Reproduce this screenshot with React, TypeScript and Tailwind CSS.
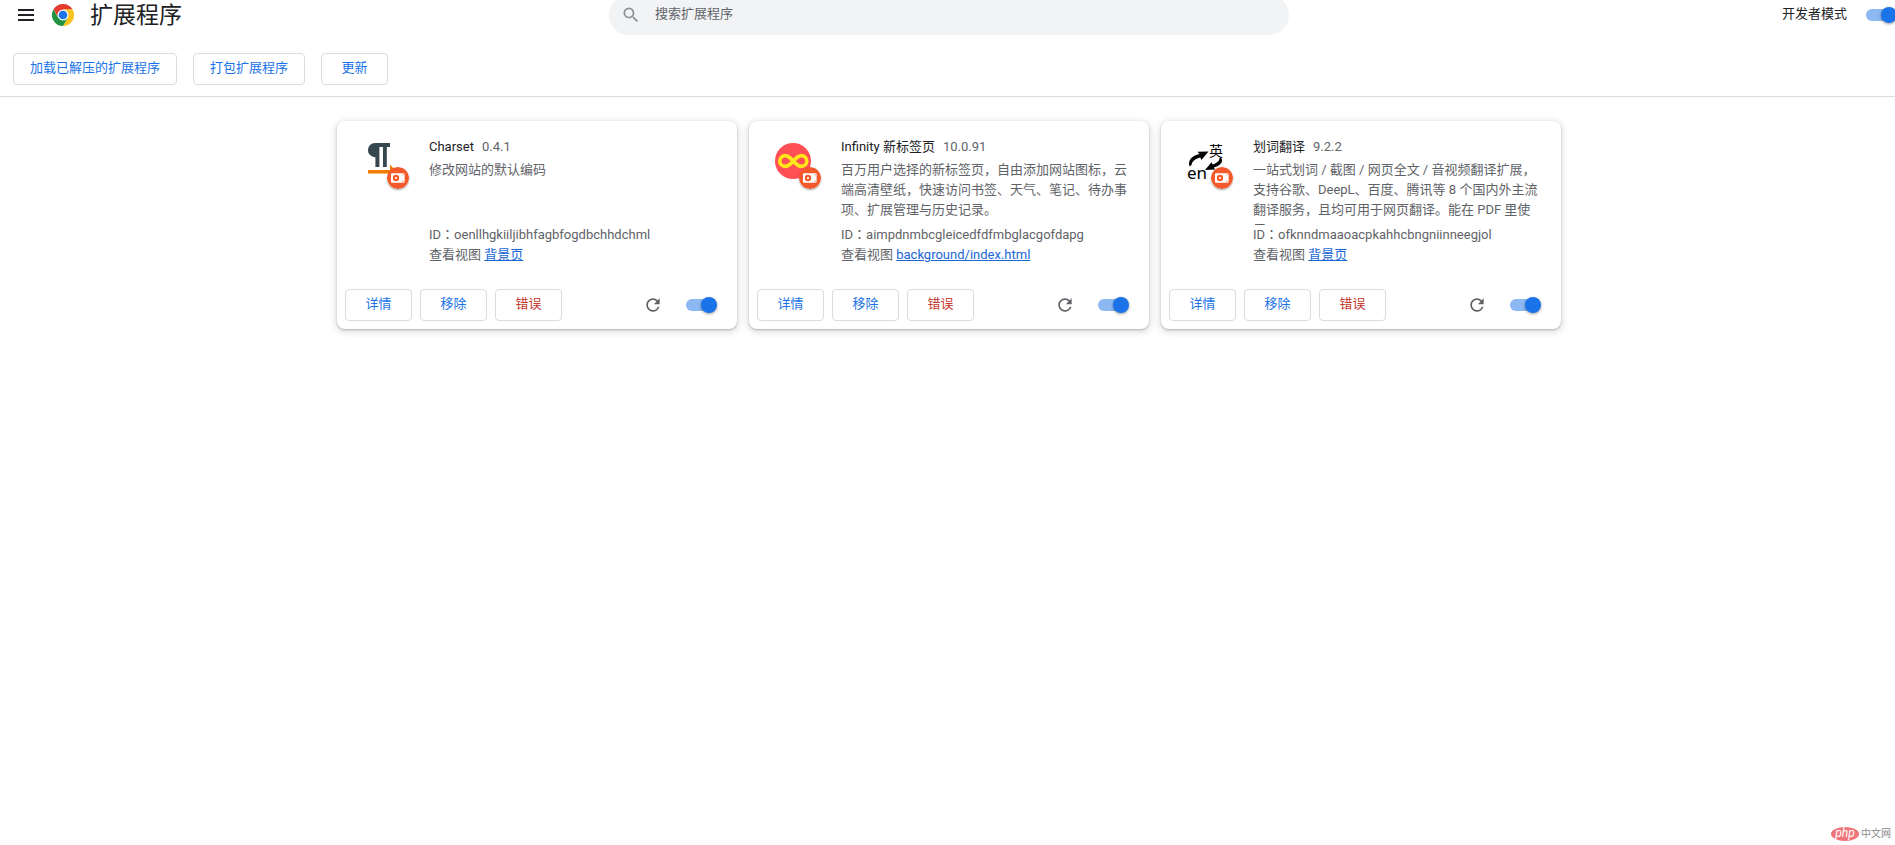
import React from 'react';

interface Extension {
  id: string;
  name: string;
  version: string;
  description: string;
  view: string;
  icon: React.ReactNode;
}

const CharsetIcon = () => (
  <svg viewBox="0 0 36 36" className="size-9">
    <path d="M12 0H27V4H23.8V24H20V4H16.4V24H12.4V14.2H12A7.1 7.1 0 0 1 12 0Z" fill="#37474f" />
    <path d="M5 27H27V21.5L34 29L27 36V30.6H5Z" fill="#f57c00" />
  </svg>
);

const InfinityIcon = () => (
  <svg viewBox="0 0 36 36" className="size-9">
    <circle cx="18" cy="18" r="18" fill="#ff5155" />
    <path
      d="M18.3 18C15.2 14.4 13.2 12.6 10.2 12.6A5.4 5.4 0 0 0 10.2 23.4C13.2 23.4 15.2 21.6 18.3 18C21.4 14.4 23.4 12.6 26.4 12.6A5.4 5.4 0 0 1 26.4 23.4C23.4 23.4 21.4 21.6 18.3 18Z"
      fill="none"
      stroke="#ffe81a"
      strokeWidth="3.6"
    />
  </svg>
);

const TranslateIcon = () => (
  <svg viewBox="0 0 36 36" className="size-9 overflow-visible">
    <text x="22" y="12.5" fontSize="14" fontFamily="Noto Sans CJK SC, sans-serif">英</text>
    <text x="0" y="35.5" fontSize="17" fontFamily="Noto Sans, sans-serif">en</text>
    <path d="M2.5 23.5C0.5 17.5 5 12.5 12.5 11L10.5 8.8L21.5 8.5L14.5 17L13.3 14.6C8 16 5 18.5 4.5 22Z" />
    <path d="M33.5 14C37.5 18.5 33.5 22.8 26.8 24.5L28.2 26.6L18 27L24.5 19.2L25.7 21.6C30 20 32.5 18 32.5 15Z" />
  </svg>
);

// Marks an unpacked extension
const UnpackedBadge = () => (
  <svg viewBox="0 0 22 22" className="absolute left-6 top-6 size-[22px] rounded-full shadow-[0_1px_2px_rgba(0,0,0,0.35)]">
    <circle cx="11" cy="11" r="11" fill="#f4592b" />
    <rect x="4" y="6.2" width="13.6" height="9.6" rx="1" fill="#fff" />
    <circle cx="9" cy="11" r="3.2" fill="#f4592b" />
    <circle cx="9" cy="11" r="1.1" fill="#fff" />
    <circle cx="16" cy="7.8" r="0.6" fill="#f4592b" />
    <circle cx="16" cy="14.2" r="0.6" fill="#f4592b" />
  </svg>
);

const ChromeLogo = () => (
  <svg viewBox="0 0 48 48" className="size-[22px]">
    <circle cx="24" cy="24" r="12" fill="#fff" />
    <path d="M24,12H44.7812a23.9939,23.9939,0,0,0-41.5639.0029L13.6079,30l.0093-.0024A11.9852,11.9852,0,0,1,24,12Z" fill="#e33b2e" />
    <path d="M34.3913,30.0029,24.0007,48A23.994,23.994,0,0,0,44.78,12.0031H23.9989l-.0025.0093A11.985,11.985,0,0,1,34.3913,30.0029Z" fill="#fcc31e" />
    <path d="M13.6086,30.0031,3.218,12.006A23.994,23.994,0,0,0,24.0025,48L34.3931,30.0029l-.0067-.0068a11.9852,11.9852,0,0,1-20.7778.007Z" fill="#229342" />
    <circle cx="24" cy="24" r="9.5" fill="#1a73e8" />
  </svg>
);

const EXTENSIONS: Extension[] = [
  {
    id: 'oenllhgkiiljibhfagbfogdbchhdchml',
    name: 'Charset',
    version: '0.4.1',
    description: '修改网站的默认编码',
    view: '背景页',
    icon: <CharsetIcon />,
  },
  {
    id: 'aimpdnmbcgleicedfdfmbglacgofdapg',
    name: 'Infinity 新标签页',
    version: '10.0.91',
    description: '百万用户选择的新标签页，自由添加网站图标，云端高清壁纸，快速访问书签、天气、笔记、待办事项、扩展管理与历史记录。',
    view: 'background/index.html',
    icon: <InfinityIcon />,
  },
  {
    id: 'ofknndmaaoacpkahhcbngniinneegjol',
    name: '划词翻译',
    version: '9.2.2',
    description: '一站式划词 / 截图 / 网页全文 / 音视频翻译扩展，支持谷歌、DeepL、百度、腾讯等 8 个国内外主流翻译服务，且均可用于网页翻译。能在 PDF 里使用',
    view: '背景页',
    icon: <TranslateIcon />,
  },
];

const ActionButton: React.FC<{ children: string; danger?: boolean }> = ({ children, danger }) => (
  <button
    type="button"
    className={`h-8 min-w-[67px] rounded border border-[#dadce0] bg-white px-4 pb-0.5 ${danger ? 'text-[#c5372b]' : 'text-[#1a73e8]'}`}
  >
    {children}
  </button>
);

const Toggle: React.FC<{ id: string; label?: string }> = ({ id, label }) => (
  <input
    id={id}
    type="checkbox"
    role="switch"
    defaultChecked
    aria-label={label}
    className="relative h-3 w-7 shrink-0 appearance-none rounded-full bg-[#8cb8f3] before:absolute before:-right-[3px] before:-top-0.5 before:size-4 before:rounded-full before:bg-[#1a73e8] before:shadow-[0_1px_3px_rgba(0,0,0,0.4)]"
  />
);

const ExtensionCard: React.FC<{ extension: Extension }> = ({ extension }) => (
  <article className="flex h-52 flex-col rounded-lg bg-white shadow-[0_1px_2px_rgba(60,64,67,0.3),0_2px_6px_2px_rgba(60,64,67,0.15)]">
    <div className="flex flex-1 gap-[30px] pl-[26px] pr-5 pt-4">
      <div className="relative mt-1.5 size-9 shrink-0">
        {extension.icon}
        <UnpackedBadge />
      </div>
      <div className="min-w-0 flex-1">
        <div className="flex gap-2">
          <h2 className="text-[#202124]">{extension.name}</h2>
          <span>{extension.version}</span>
        </div>
        <p className="mt-[3px] h-[65px] overflow-hidden">{extension.description}</p>
        <div className="font-['Roboto','Noto_Sans_CJK_TC',sans-serif]">ID：{extension.id}</div>
        <div>
          查看视图 <a href="#" className="text-[#1a66d6] underline">{extension.view}</a>
        </div>
      </div>
    </div>
    <div className="flex items-center gap-2 pb-2 pl-2 pr-[23px]">
      <ActionButton>详情</ActionButton>
      <ActionButton>移除</ActionButton>
      <ActionButton danger>错误</ActionButton>
      <button type="button" aria-label="重新加载" className="ml-auto mr-[15px]">
        <svg viewBox="0 0 24 24" className="size-5" fill="#5f6368">
          <path d="M17.65 6.35A7.958 7.958 0 0 0 12 4c-4.42 0-7.99 3.58-7.99 8s3.57 8 7.99 8c3.73 0 6.84-2.55 7.73-6h-2.08A5.99 5.99 0 0 1 12 18c-3.31 0-6-2.69-6-6s2.69-6 6-6c1.66 0 3.14.69 4.22 1.78L13 11h7V4l-2.35 2.35z" />
        </svg>
      </button>
      <Toggle id={`toggle-${extension.id}`} label={extension.name} />
    </div>
  </article>
);

const App: React.FC = () => {
  return (
    <div className="relative min-h-screen bg-white font-['Roboto','Noto_Sans_CJK_SC',sans-serif] text-[13px] leading-5 text-[#5f6368]">
      <header className="flex h-[35px] items-end overflow-hidden">
        <div className="-mr-[3px] grid h-10 flex-1 grid-cols-[1fr_minmax(0,680px)_1fr] items-center">
          <div className="flex items-center pl-[18px]">
            <button type="button" aria-label="主菜单" className="mr-[18px]">
              <svg viewBox="0 0 16 12" className="h-3 w-4" fill="#202124">
                <path d="M0 0h16v2H0zM0 5h16v2H0zM0 10h16v2H0z" />
              </svg>
            </button>
            <ChromeLogo />
            <h1 className="ml-4 whitespace-nowrap pt-0.5 text-[23px] leading-8 text-[#202124]">扩展程序</h1>
          </div>
          <div className="flex h-10 items-center gap-3.5 rounded-full bg-[#f1f3f4] pl-3 pr-4">
            <svg viewBox="0 0 24 24" className="size-5 shrink-0" fill="#8e9194">
              <path d="M15.5 14h-.79l-.28-.27A6.471 6.471 0 0 0 16 9.5 6.5 6.5 0 1 0 9.5 16c1.61 0 3.09-.59 4.23-1.57l.27.28v.79l5 4.99L20.49 19l-4.99-5zm-6 0C7.01 14 5 11.99 5 9.5S7.01 5 9.5 5 14 7.01 14 9.5 11.99 14 9.5 14z" />
            </svg>
            <input
              type="search"
              aria-label="搜索扩展程序"
              placeholder="搜索扩展程序"
              className="h-full min-w-0 flex-1 bg-transparent pb-1 outline-none placeholder:text-[#5f6368]"
            />
          </div>
          <div className="flex items-center justify-end gap-[19px] pr-1">
            <label htmlFor="dev-mode" className="pb-0.5 whitespace-nowrap text-[#202124]">开发者模式</label>
            <Toggle id="dev-mode" />
          </div>
        </div>
      </header>

      <div className="flex flex-wrap gap-4 border-b border-[#dadce0] pb-[11px] pl-[13px] pt-[18px]">
        <ActionButton>加载已解压的扩展程序</ActionButton>
        <ActionButton>打包扩展程序</ActionButton>
        <ActionButton>更新</ActionButton>
      </div>

      <main className="mx-auto grid max-w-[1240px] grid-cols-[repeat(auto-fit,400px)] justify-center gap-3 pl-[3px] pt-6">
        {EXTENSIONS.map(extension => (
          <ExtensionCard key={extension.id} extension={extension} />
        ))}
      </main>

      {/* Site watermark */}
      <div className="absolute bottom-1 right-1 flex items-center gap-0.5 text-[10px] leading-3 text-[#8a8a8a]">
        <span className="flex h-3.5 w-7 items-center justify-center rounded-[50%] bg-[#f0757a] pb-0.5 text-[12px] italic text-white">php</span>
        <span>中文网</span>
      </div>
    </div>
  );
};

export default App;
